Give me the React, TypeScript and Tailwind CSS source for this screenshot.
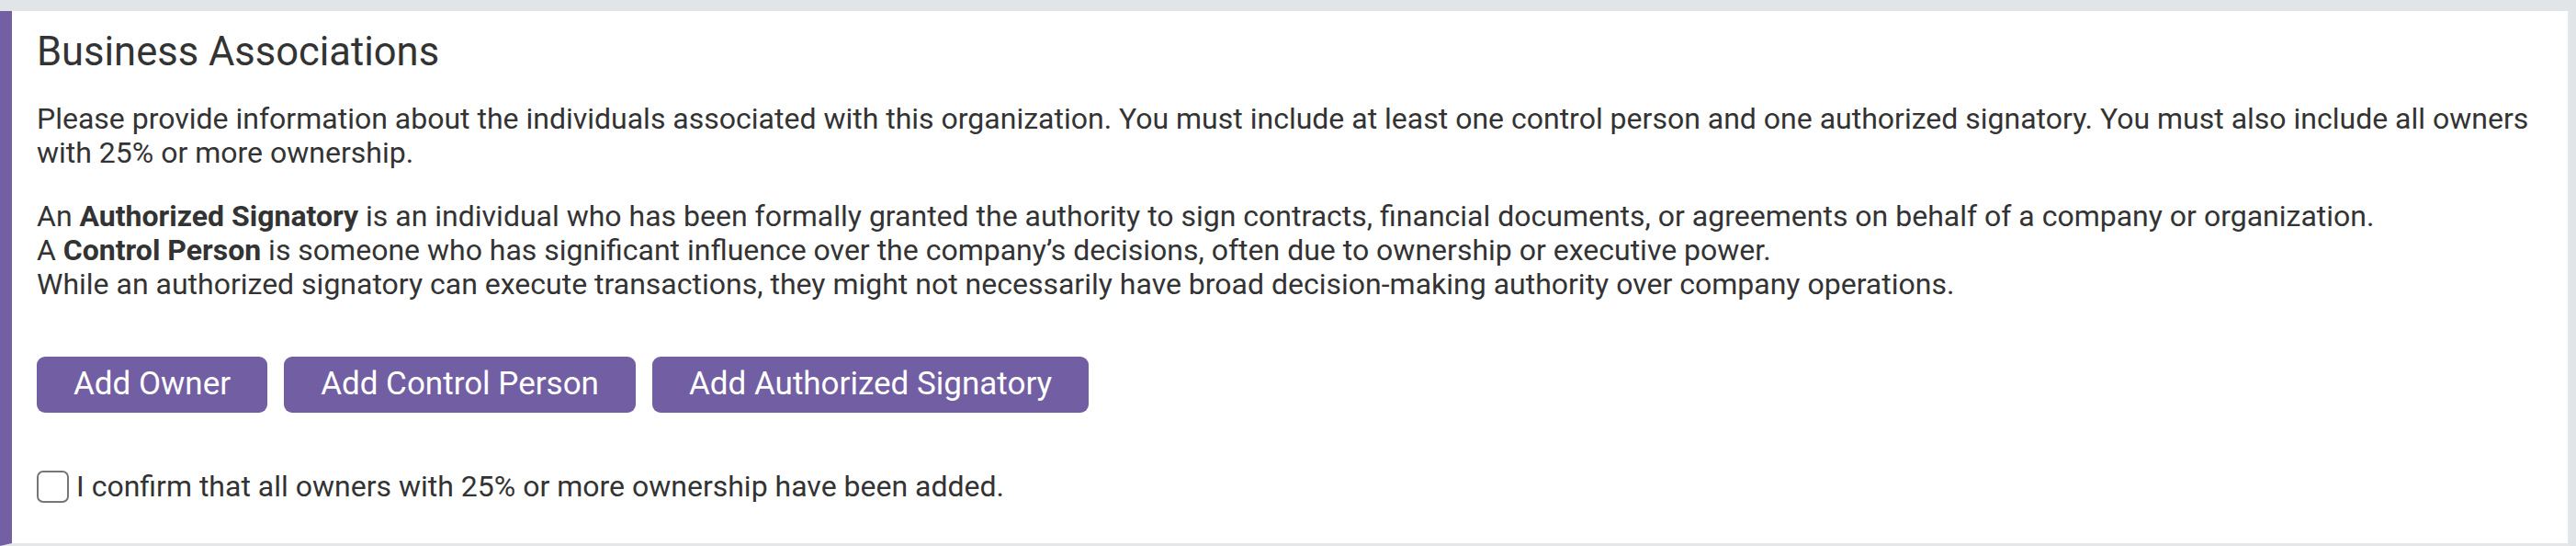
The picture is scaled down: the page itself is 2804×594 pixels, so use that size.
import React from "react";

export default function App() {
  return (
    <div
      className="min-h-screen bg-[#e2e5e8] pt-[12px] pr-[7px] text-[#333333]"
      style={{ fontFamily: "Roboto, 'Liberation Sans', sans-serif" }}
    >
      <div className="bg-white border-l-[13px] border-l-[#735fa3] border-r-2 border-r-[#e6e7e8] border-b-[3px] border-b-[#e6e7e8] pl-[27px] pr-[20px] pt-[19px] pb-[43px]">
        <h2 className="text-[43.5px] leading-[52px] font-normal m-0">Business Associations</h2>
        <p className="text-[32px] leading-[37px] mt-[28px]">
          Please provide information about the individuals associated with this organization. You must include at least one control person and one authorized signatory. You must also include all owners with 25% or more ownership.
        </p>
        <p className="text-[32px] leading-[37px] mt-[32px]">
          An <strong className="font-bold">Authorized Signatory</strong> is an individual who has been formally granted the authority to sign contracts, financial documents, or agreements on behalf of a company or organization.
          <br />
          A <strong className="font-bold">Control Person</strong> is someone who has significant influence over the company’s decisions, often due to ownership or executive power.
          <br />
          While an authorized signatory can execute transactions, they might not necessarily have broad decision-making authority over company operations.
        </p>
        <div className="flex gap-[18px] mt-[60px]">
          <button className="h-[61px] px-[40px] rounded-[9px] bg-[#725ea3] text-white text-[35px]">Add Owner</button>
          <button className="h-[61px] px-[40px] rounded-[9px] bg-[#725ea3] text-white text-[35px]">Add Control Person</button>
          <button className="h-[61px] px-[40px] rounded-[9px] bg-[#725ea3] text-white text-[35px]">Add Authorized Signatory</button>
        </div>
        <label className="flex items-center gap-[8px] mt-[62px] text-[32px] leading-[37px]">
          <span className="w-[35px] h-[35px] rounded-[7px] border-2 border-[#767676] bg-white shrink-0" />
          <span>I confirm that all owners with 25% or more ownership have been added.</span>
        </label>
      </div>
    </div>
  );
}
